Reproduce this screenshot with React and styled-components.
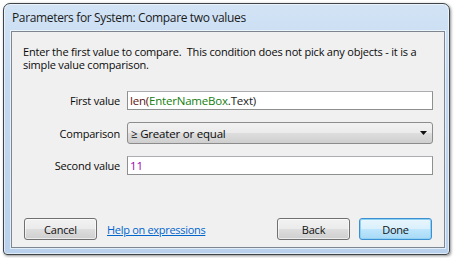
import React from 'react'
import styled, { createGlobalStyle } from 'styled-components'

const Global = createGlobalStyle`
  html, body { margin: 0; padding: 0; background: #ffffff; }
  body { font-family: "Open Sans", "Noto Sans", sans-serif; }
`

const Page = styled.div`
  width: 456px;
  height: 258px;
  padding: 3px 6px 3px 3px;
  box-sizing: border-box;
`

const Frame = styled.div`
  height: 252px;
  box-sizing: border-box;
  border: 1px solid #3f4448;
  border-radius: 7px 7px 4px 4px;
  background: linear-gradient(180deg, #d2e3f5 0%, #c4d9f0 30%, #b9d1ec 100%);
  box-shadow: 1px 1px 3px rgba(0, 0, 0, 0.45), inset 0 0 0 1px rgba(255, 255, 255, 0.55);
  display: flex;
  flex-direction: column;
  padding: 0 4px 6px 7px;
`

const TitleBar = styled.div`
  height: 27px;
  display: flex;
  align-items: center;
  padding-left: 1px;
  font-size: 12px;
  color: #1b1b1b;
  letter-spacing: -0.35px;
`

const Client = styled.div`
  flex: 1;
  background: #f0f0f0;
  border: 1px solid #7e8791;
  box-shadow: 0 0 0 1px rgba(255, 255, 255, 0.6);
  display: flex;
  flex-direction: column;
  padding: 14px 11px 6px 11px;
  font-size: 11px;
  color: #0a0a0a;
`

const Intro = styled.p`
  margin: 0;
  line-height: 12.5px;
  letter-spacing: -0.2px;
`

const Form = styled.div`
  margin-top: 20px;
  display: grid;
  grid-template-columns: 97px 1fr;
  column-gap: 7px;
  row-gap: 12px;
  align-items: center;
`

const Label = styled.div`
  text-align: right;
  letter-spacing: -0.2px;
`

const Field = styled.div`
  height: 19px;
  box-sizing: border-box;
  border: 1px solid #8e8f8f;
  border-top-color: #abadb3;
  background: #fff;
  display: flex;
  align-items: center;
  padding-left: 2px;
  font-size: 11.5px;
  letter-spacing: -0.2px;
`

const Tok = styled.span`
  color: ${(p) => p.$c};
`

const Select = styled.div`
  height: 22px;
  box-sizing: border-box;
  border: 1px solid #8c8c8c;
  border-radius: 3px;
  background: linear-gradient(180deg, #f2f2f2 0%, #ebebeb 48%, #dddddd 52%, #cfcfcf 100%);
  display: flex;
  align-items: center;
  justify-content: space-between;
  padding: 0 5px 0 3px;
  font-size: 11.5px;
  letter-spacing: -0.2px;
`

const Footer = styled.div`
  margin-top: auto;
  display: flex;
  align-items: center;
  padding: 0 1px;
  margin-bottom: 1px;
`

const Button = styled.div`
  width: 73px;
  height: 22px;
  box-sizing: border-box;
  border: 1px solid ${(p) => (p.$default ? '#3c8fd0' : '#707070')};
  border-radius: 3px;
  background: ${(p) =>
    p.$default
      ? 'linear-gradient(180deg, #eaf6fd 0%, #d9f0fc 48%, #bee6fd 52%, #a7d9f5 100%)'
      : 'linear-gradient(180deg, #f2f2f2 0%, #ebebeb 48%, #dddddd 52%, #cfcfcf 100%)'};
  box-shadow: ${(p) => (p.$default ? 'inset 0 0 0 1px #8fd1f3' : 'inset 0 0 0 1px rgba(255,255,255,0.6)')};
  display: flex;
  align-items: center;
  justify-content: center;
  color: #111;
  letter-spacing: -0.2px;
`

const Link = styled.a`
  margin-left: 10px;
  color: #0066cc;
  text-decoration: underline;
  letter-spacing: -0.3px;
`

const Spacer = styled.div`
  flex: 1;
`

const Gap = styled.div`
  width: 9px;
`

export default function App() {
  return (
    <Page>
      <Global />
      <Frame>
        <TitleBar>Parameters for System: Compare two values</TitleBar>
        <Client>
          <Intro>
            Enter the first value to compare.&nbsp; This condition does not pick any objects - it is a simple value
            comparison.
          </Intro>
          <Form>
            <Label>First value</Label>
            <Field>
              <Tok $c="#5a1010">len(</Tok>
              <Tok $c="#14800f">EnterNameBox</Tok>
              <Tok $c="#222">.Text)</Tok>
            </Field>
            <Label>Comparison</Label>
            <Select>
              <span>≥ Greater or equal</span>
              <svg width="7" height="4" viewBox="0 0 7 4">
                <path d="M0 0h7L3.5 4z" fill="#111" />
              </svg>
            </Select>
            <Label>Second value</Label>
            <Field>
              <Tok $c="#a000b0">11</Tok>
            </Field>
          </Form>
          <Footer>
            <Button>Cancel</Button>
            <Link>Help on expressions</Link>
            <Spacer />
            <Button>Back</Button>
            <Gap />
            <Button $default>Done</Button>
          </Footer>
        </Client>
      </Frame>
    </Page>
  )
}
